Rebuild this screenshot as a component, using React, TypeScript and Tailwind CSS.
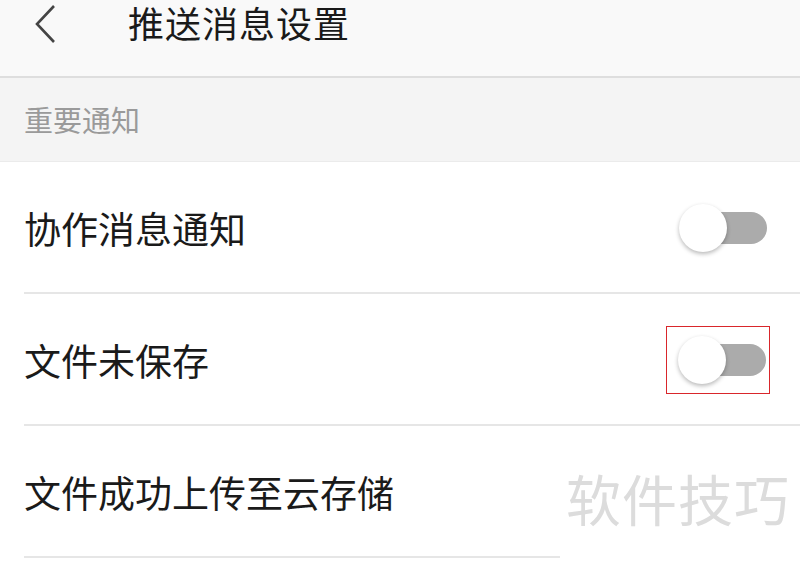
const font = { fontFamily: '"Noto Sans CJK SC", "Noto Sans", sans-serif' };

const Toggle = ({ marked }: { marked?: boolean }) => (
  <div
    className={
      'relative flex h-[68px] w-[104px] items-center justify-end pr-[3px] ' +
      (marked ? 'border-[1.5px] border-[#d9262b]' : '')
    }
  >
    <div className="relative h-[32px] w-[88px]">
      <div className="absolute right-0 top-0 h-[32px] w-[64px] rounded-full bg-[#ababab]" />
      <div className="absolute left-0 top-[-8px] h-[48px] w-[48px] rounded-full bg-white shadow-[0_2px_4px_rgba(0,0,0,0.28)]" />
    </div>
  </div>
);

const rows = [
  { label: '协作消息通知', toggle: true },
  { label: '文件未保存', toggle: true, marked: true },
  { label: '文件成功上传至云存储', toggle: false },
];

export default function App() {
  return (
    <div className="h-[564px] w-[800px] overflow-hidden bg-white" style={font}>
      <header className="flex h-[78px] items-start border-b-2 border-[#dedede] bg-[#f9f9f9]">
        <svg className="ml-[32px] mt-[4px]" width="28" height="40" viewBox="0 0 28 40">
          <path d="M22 2 L5 20 L22 38" fill="none" stroke="#444" strokeWidth="2.6" />
        </svg>
        <h1 className="ml-[68px] mt-[4px] text-[36px] leading-[36px] tracking-[1px] text-[#1a1a1a]">
          推送消息设置
        </h1>
      </header>
      <div className="flex h-[84px] items-center border-b border-[#ebebeb] bg-[#f4f4f4] pl-[24px] text-[29px] text-[#9a9a9a]">
        重要通知
      </div>
      {rows.map((r, i) => (
        <div key={r.label} className="relative flex h-[132px] items-center pl-[24px] pr-[30px]">
          <span className="text-[37px] leading-none text-[#1a1a1a]">{r.label}</span>
          <div className="ml-auto">{r.toggle && <Toggle marked={r.marked} />}</div>
          <div
            className={
              'absolute bottom-0 left-[24px] h-[2px] bg-[#e6e6e6] ' +
              (i === 2 ? 'w-[536px]' : 'right-0')
            }
          />
          {i === 2 && (
            <span className="absolute right-[10px] top-[44px] text-[55px] leading-none tracking-[1px] text-[#dcdcdc]">
              软件技巧
            </span>
          )}
        </div>
      ))}
    </div>
  );
}
